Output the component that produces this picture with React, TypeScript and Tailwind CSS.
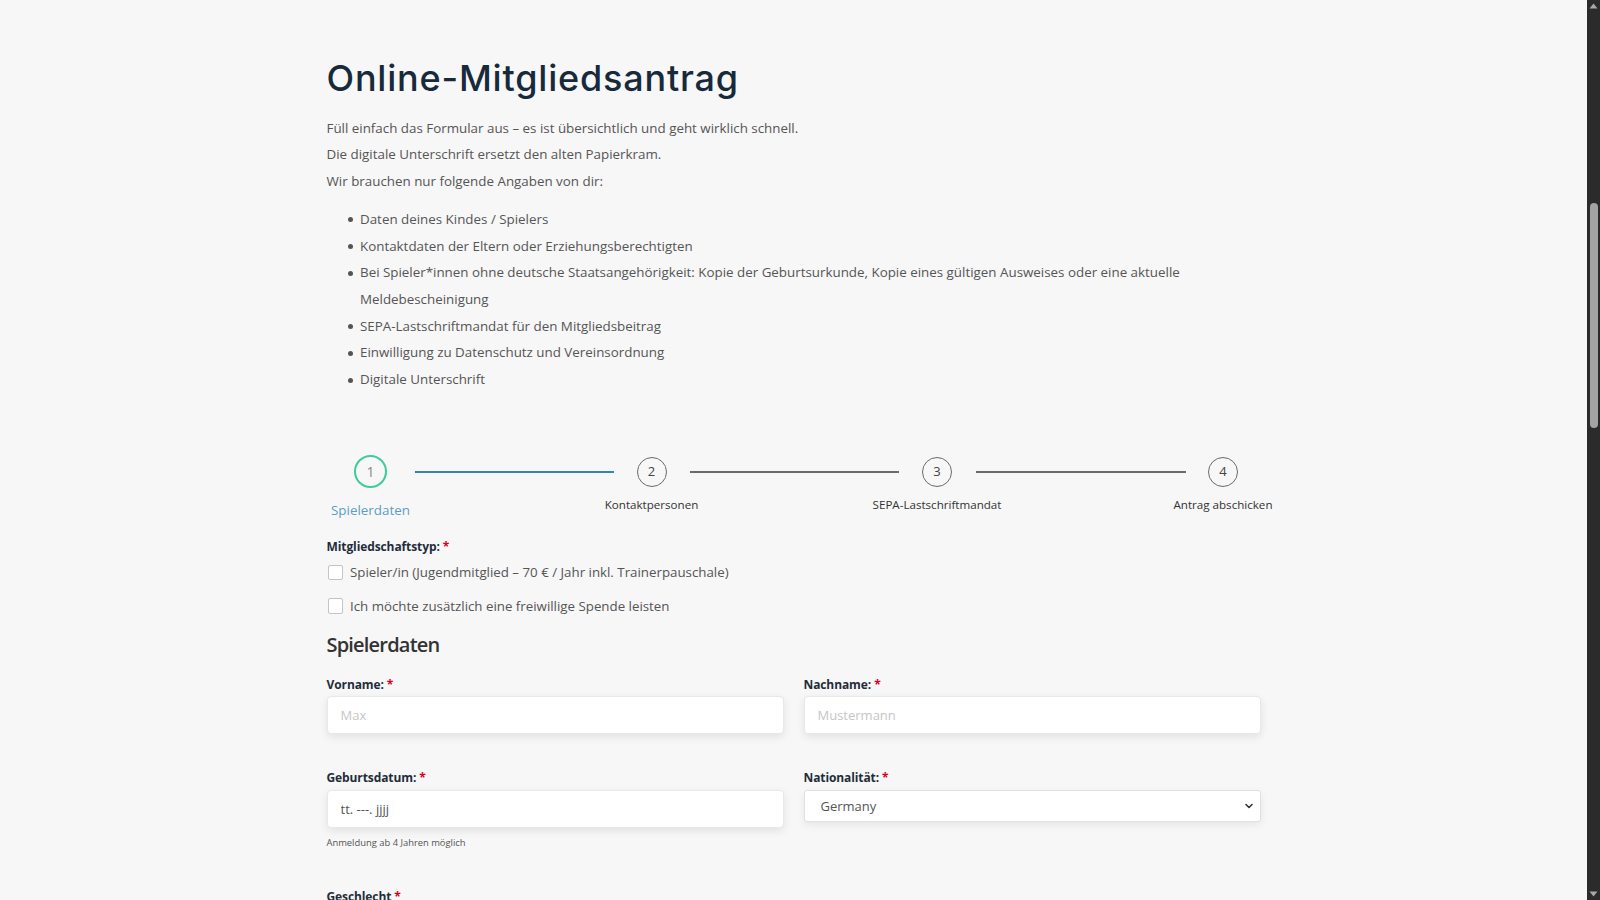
import React from "react";

const Req = () => <span className="text-[#d9001b]">*</span>;

function Label({ children }: { children: React.ReactNode }) {
  return (
    <div className="text-[12px] leading-[17px] font-bold text-[#1f2d3a] tracking-[-0.1px]">
      {children} <Req />
    </div>
  );
}

function Bullet({ children }: { children: React.ReactNode }) {
  return (
    <li className="flex">
      <span className="w-[33.5px] shrink-0 flex justify-end pr-[7.5px] pt-[11.5px]">
        <span className="block w-[5px] h-[5px] rounded-full bg-[#555]" />
      </span>
      <span>{children}</span>
    </li>
  );
}

function Step({ n, label, w }: { n: number; label: string; w: string }) {
  return (
    <div className={`${w} shrink-0 flex flex-col items-center`}>
      <div className="h-[33px] flex items-center justify-center">
        <div className="w-[30px] h-[30px] rounded-full border border-[#6a6a6a] flex items-center justify-center text-[13px] text-[#444]">
          {n}
        </div>
      </div>
      <div className="mt-[7.5px] text-[11.6px] leading-[18px] text-[#333] whitespace-nowrap">{label}</div>
    </div>
  );
}

function Line({ w, blue }: { w: string; blue?: boolean }) {
  return (
    <div className={`${w} shrink-0 h-[33px] flex items-center`}>
      <div className={`h-[2px] w-full ${blue ? "bg-[#3584b8]" : "bg-[#6b6b6b]"}`} />
    </div>
  );
}

function Checkbox({ children, className }: { children: React.ReactNode; className?: string }) {
  return (
    <div className={`flex items-center h-[20px] ${className ?? ""}`}>
      <span className="ml-[1px] w-[15.5px] h-[15.5px] bg-white border border-[#c4c4c4] rounded-[2px] shrink-0" />
      <span className="ml-[7px] text-[13.3px] leading-[20px] text-[#555] whitespace-nowrap">{children}</span>
    </div>
  );
}

const inputCls =
  "block w-full bg-white border border-[#e8e8e8] rounded-[4px] px-[13px] text-[13px] text-[#555] shadow-[0_3px_8px_rgba(0,0,0,0.09)] outline-none";

export default function App() {
  return (
    <div className="flex h-screen w-full overflow-hidden bg-[#f7f7f7] font-['Open_Sans',sans-serif]">
      <main className="flex-1 min-w-0">
        <div className="mx-auto w-[934px] pt-[56.3px]">
          <h1 className="font-['Inter',sans-serif] text-[36px] leading-[44px] font-medium text-[#172a3c] tracking-[0.8px]">
            Online-Mitgliedsantrag
          </h1>
          <div className="mt-[14.3px] text-[13.37px] leading-[26.7px] text-[#555]">
            <p>Füll einfach das Formular aus – es ist übersichtlich und geht wirklich schnell.</p>
            <p>Die digitale Unterschrift ersetzt den alten Papierkram.</p>
            <p>Wir brauchen nur folgende Angaben von dir:</p>
          </div>
          <ul className="mt-[11.2px] text-[13.37px] leading-[26.7px] text-[#555]">
            <Bullet>Daten deines Kindes / Spielers</Bullet>
            <Bullet>Kontaktdaten der Eltern oder Erziehungsberechtigten</Bullet>
            <Bullet>
              Bei Spieler*innen ohne deutsche Staatsangehörigkeit: Kopie der Geburtsurkunde, Kopie eines gültigen Ausweises oder eine aktuelle
              <br />
              Meldebescheinigung
            </Bullet>
            <Bullet>SEPA-Lastschriftmandat für den Mitgliedsbeitrag</Bullet>
            <Bullet>Einwilligung zu Datenschutz und Vereinsordnung</Bullet>
            <Bullet>Digitale Unterschrift</Bullet>
          </ul>

          <div className="mt-[62.2px] flex items-start">
            <div className="w-[88px] shrink-0 flex flex-col items-center">
              <div className="w-[33px] h-[33px] rounded-full border-2 border-[#3dcc9c] flex items-center justify-center text-[14px] text-[#888]">
                1
              </div>
              <div className="mt-[12px] text-[13.4px] leading-[20px] text-[#5a9fc4] whitespace-nowrap">Spielerdaten</div>
            </div>
            <Line w="w-[199px]" blue />
            <Step n={2} label="Kontaktpersonen" w="w-[76px]" />
            <Line w="w-[209px]" />
            <Step n={3} label="SEPA-Lastschriftmandat" w="w-[77px]" />
            <Line w="w-[210px]" />
            <Step n={4} label="Antrag abschicken" w="w-[75px]" />
          </div>

          <div className="mt-[17.6px]">
            <Label>Mitgliedschaftstyp:</Label>
          </div>
          <Checkbox className="mt-[7.9px]">Spieler/in (Jugendmitglied – 70 € / Jahr inkl. Trainerpauschale)</Checkbox>
          <Checkbox className="mt-[13.6px]">Ich möchte zusätzlich eine freiwillige Spende leisten</Checkbox>

          <h2 className="mt-[13.9px] text-[20px] leading-[30px] font-semibold text-[#333] tracking-[-0.8px]">Spielerdaten</h2>

          <div className="mt-[16.1px] grid grid-cols-2 gap-x-[20px]">
            <div>
              <Label>Vorname:</Label>
              <input readOnly placeholder="Max" className={`mt-[3.4px] h-[38px] placeholder:text-[#c6c6c6] ${inputCls}`} />
            </div>
            <div>
              <Label>Nachname:</Label>
              <input readOnly placeholder="Mustermann" className={`mt-[3.4px] h-[38px] placeholder:text-[#c6c6c6] ${inputCls}`} />
            </div>
            <div className="mt-[34.6px]">
              <Label>Geburtsdatum:</Label>
              <input readOnly placeholder="tt. ---. jjjj" className={`mt-[4.4px] h-[38px] placeholder:text-[#555] ${inputCls}`} />
              <div className="mt-[8px] text-[9.4px] leading-[14px] text-[#555]">Anmeldung ab 4 Jahren möglich</div>
            </div>
            <div className="mt-[34.6px]">
              <Label>Nationalität:</Label>
              <div className="mt-[4.4px] flex items-center justify-between w-full h-[32px] bg-white border border-[#e0e0e0] rounded-[3px] pl-[16px] pr-[6px] text-[13px] text-[#555] shadow-[0_3px_8px_rgba(0,0,0,0.07)]">
                <span>Germany</span>
                <svg width="10" height="10" viewBox="0 0 10 10" fill="none">
                  <path d="M2 3.5 L5 6.5 L8 3.5" stroke="#333" strokeWidth="1.6" strokeLinecap="round" strokeLinejoin="round" />
                </svg>
              </div>
            </div>
          </div>

          <div className="mt-[38px]">
            <Label>Geschlecht</Label>
          </div>
        </div>
      </main>
      <div className="w-[13px] shrink-0 bg-[#2b2b2b] flex flex-col items-center">
        <svg width="9" height="6" viewBox="0 0 9 6" className="mt-[3px]">
          <path d="M4.5 0.5 L8.5 5.5 L0.5 5.5 Z" fill="#a8a8a8" />
        </svg>
        <div className="mt-[194px] w-[8px] h-[225px] rounded-full bg-[#a3a3a3]" />
        <div className="flex-1" />
        <svg width="9" height="6" viewBox="0 0 9 6" className="mb-[3px]">
          <path d="M0.5 0.5 L8.5 0.5 L4.5 5.5 Z" fill="#a8a8a8" />
        </svg>
      </div>
    </div>
  );
}
